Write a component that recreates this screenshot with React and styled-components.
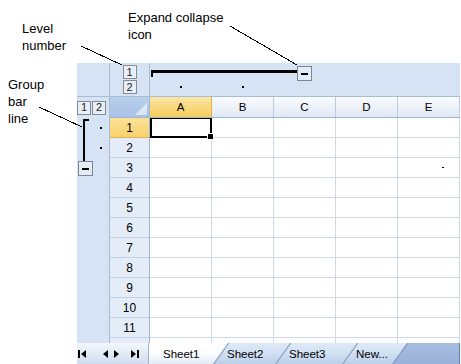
import React from "react";
import styled, { createGlobalStyle } from "styled-components";

const GlobalStyle = createGlobalStyle`
  html, body {
    margin: 0;
    padding: 0;
    background: #fff;
  }
  body {
    font-family: "Liberation Sans", Arial, sans-serif;
    color: #000;
  }
`;

const Page = styled.div`
  position: relative;
  width: 461px;
  height: 364px;
  overflow: hidden;
  box-sizing: border-box;
  padding: 63px 0 0 77px;
`;

const Callout = styled.div`
  position: absolute;
  left: ${(p) => p.$x}px;
  top: ${(p) => p.$y}px;
  font-size: 13px;
  line-height: 17px;
  white-space: pre;
`;

const Leaders = styled.svg`
  position: absolute;
  left: 0;
  top: 0;
  pointer-events: none;
`;

const Control = styled.div`
  width: 383px;
  height: 301px;
  display: flex;
  flex-direction: column;
  background: #d5e3f5;
  font-size: 11.5px;
`;

const Body = styled.div`
  flex: 1;
  min-height: 0;
  display: grid;
  grid-template-columns: 33px 40px 310px;
  grid-template-rows: 34px 21px 1fr;
  overflow: hidden;
`;

const Band = styled.div`
  box-sizing: border-box;
  background: #d5e3f5;
  border-right: ${(p) => (p.$right ? "1px solid #a9bcd6" : "none")};
  border-bottom: ${(p) => (p.$bottom ? "1px solid #a9bcd6" : "none")};
  min-height: 0;
  overflow: hidden;
`;

const LevelStack = styled(Band)`
  display: flex;
  flex-direction: ${(p) => (p.$row ? "row" : "column")};
  align-items: ${(p) => (p.$row ? "center" : "center")};
  justify-content: ${(p) => (p.$row ? "flex-start" : "center")};
  gap: 1px;
  padding-left: ${(p) => (p.$row ? "0" : "0")};
`;

const LevelBtn = styled.div`
  width: 14px;
  height: 14px;
  box-sizing: border-box;
  border: 1px solid #858b93;
  background: #e9eff8;
  display: flex;
  align-items: center;
  justify-content: center;
  font-size: 11px;
  line-height: 1;
  color: #222;
`;

const ToggleBtn = styled.div`
  flex: none;
  width: 15px;
  height: 15px;
  box-sizing: border-box;
  border: 1px solid #7d8590;
  background: #e4ecf7;
  display: flex;
  align-items: center;
  justify-content: center;
  margin-left: ${(p) => p.$ml || 0}px;

  &::after {
    content: "";
    width: 7px;
    height: 2px;
    background: #000;
  }
`;

const TopGroup = styled(Band)`
  display: flex;
  flex-direction: column;
`;

const GroupRow = styled.div`
  display: flex;
  align-items: flex-start;
  padding: 3px 0 0 1px;
`;

const HBracket = styled.div`
  flex: none;
  width: 146px;
  height: 7px;
  margin-top: 4px;
  box-sizing: border-box;
  border-top: 3px solid #000;
  border-left: 2px solid #000;
`;

const DotRow = styled.div`
  display: flex;
  margin-top: 5px;
`;

const DotCell = styled.div`
  width: 62px;
  height: 2px;
  display: flex;
  justify-content: center;
`;

const Dot = styled.span`
  width: 2px;
  height: 2px;
  background: #000;
`;

const LeftGroup = styled(Band)`
  display: flex;
`;

const BracketCol = styled.div`
  width: 16px;
  display: flex;
  flex-direction: column;
`;

const VBracket = styled.div`
  width: 6px;
  height: 42px;
  margin: 1px 0 0 6px;
  box-sizing: border-box;
  border-top: 2px solid #000;
  border-left: 2px solid #000;
`;

const DotCol = styled.div`
  width: 16px;
  padding-right: 1px;
  display: flex;
  flex-direction: column;
`;

const DotSlot = styled.div`
  height: 20px;
  display: flex;
  align-items: center;
  justify-content: center;
`;

const Corner = styled.div`
  position: relative;
  box-sizing: border-box;
  border-right: 1px solid #9eb6ce;
  border-bottom: 1px solid #9eb6ce;
  background: linear-gradient(#b9cfec, #a8c2e6);

  &::after {
    content: "";
    position: absolute;
    right: 2px;
    bottom: 2px;
    width: 12px;
    height: 12px;
    background: linear-gradient(135deg, #f4f7fb, #d2deed);
    clip-path: polygon(100% 0, 100% 100%, 0 100%);
  }
`;

const ColHeads = styled.div`
  display: flex;
  box-sizing: border-box;
  border-bottom: 1px solid #9eb6ce;
`;

const ColHead = styled.div`
  flex: none;
  width: 62px;
  box-sizing: border-box;
  border-right: 1px solid ${(p) => (p.$on ? "#e1b24c" : "#bccbe0")};
  display: flex;
  align-items: center;
  justify-content: center;
  background: ${(p) =>
    p.$on
      ? "linear-gradient(#fbe6a6, #f9da82 45%, #f6cb5a)"
      : "linear-gradient(#f9fbfe, #edf2f9 50%, #dfe8f4)"};
`;

const RowHeads = styled.div`
  box-sizing: border-box;
  border-right: 1px solid #9eb6ce;
  overflow: hidden;
  min-height: 0;
`;

const RowHead = styled.div`
  height: 20px;
  box-sizing: border-box;
  border-bottom: 1px solid ${(p) => (p.$on ? "#e1b24c" : "#c3d1e4")};
  display: flex;
  align-items: center;
  justify-content: center;
  font-size: 12px;
  background: ${(p) =>
    p.$on ? "linear-gradient(#fbe29a, #f7d26b)" : "#e4ecf7"};
`;

const Cells = styled.div`
  display: grid;
  grid-template-columns: repeat(5, 62px);
  grid-auto-rows: 20px;
  background: #fff;
  overflow: hidden;
  min-height: 0;
`;

const Cell = styled.div`
  position: relative;
  box-sizing: border-box;
  border-right: 1px solid #d0d7e5;
  border-bottom: 1px solid #d0d7e5;
  display: flex;
  align-items: center;
  justify-content: flex-end;
  padding-right: 15px;
`;

const ActiveFrame = styled.span`
  position: absolute;
  left: 0;
  top: -1px;
  right: -1px;
  bottom: -1px;
  border: 2px solid #000;
  z-index: 1;

  &::after {
    content: "";
    position: absolute;
    right: -4px;
    bottom: -4px;
    width: 5px;
    height: 5px;
    background: #000;
    border: 1px solid #fff;
    box-sizing: content-box;
  }
`;

const Mark = styled.span`
  width: 2px;
  height: 1px;
  background: #000;
`;

const TabBar = styled.div`
  flex: none;
  height: 21px;
  display: flex;
  background: #9cb4da;
`;

const Nav = styled.div`
  flex: none;
  width: 72px;
  box-sizing: border-box;
  border-right: 1px solid #9eb3d2;
  display: flex;
  align-items: center;
  background: linear-gradient(#f3f7fc, #e2eaf6 50%, #cfdcef);
`;

const NavIcon = styled.svg`
  flex: none;
  margin-left: ${(p) => p.$ml}px;
`;

const Tab = styled.div`
  position: relative;
  flex: none;
  width: ${(p) => p.$w}px;
  margin-left: ${(p) => (p.$first ? 0 : -15)}px;
  box-sizing: border-box;
  padding-left: 14px;
  display: flex;
  align-items: center;
  background: #8aa3c8;
  clip-path: ${(p) =>
    p.$first ? "none" : "polygon(0 100%, 15px 0, 100% 0, 100% 100%)"};

  &::before {
    content: "";
    position: absolute;
    inset: 0;
    background: ${(p) =>
      p.$active
        ? "linear-gradient(#ffffff, #fbfcfe 55%, #e3ebf6)"
        : "linear-gradient(#dfe9f6, #d3e1f3 45%, #bccfea)"};
    clip-path: ${(p) =>
      p.$first ? "none" : "polygon(1.5px 100%, 16.5px 0, 100% 0, 100% 100%)"};
  }
`;

const TabLabel = styled.span`
  position: relative;
  font-size: 11.5px;
`;

const Filler = styled.div`
  flex: 1;
  margin-left: -15px;
  position: relative;
  background: #7d98c2;
  clip-path: polygon(0 100%, 15px 0, 100% 0, 100% 100%);
  border-right: 1px solid #5f7fae;

  &::before {
    content: "";
    position: absolute;
    inset: 0;
    background: linear-gradient(#a6bde0, #9ab2d9);
    clip-path: polygon(1.5px 100%, 16.5px 0, 100% 0, 100% 100%);
  }
`;

const cols = ["A", "B", "C", "D", "E"];
const rows = Array.from({ length: 12 }, (_, i) => i + 1);

const tabs = [
  { name: "Sheet1", w: 79, active: true, first: true },
  { name: "Sheet2", w: 77 },
  { name: "Sheet3", w: 82 },
  { name: "New...", w: 65 },
];

export default function App() {
  return (
    <>
      <GlobalStyle />
      <Page>
        <Control>
          <Body>
            <Band $right $bottom />
            <LevelStack $right $bottom>
              <LevelBtn>1</LevelBtn>
              <LevelBtn>2</LevelBtn>
            </LevelStack>
            <TopGroup $bottom>
              <GroupRow>
                <HBracket />
                <ToggleBtn />
              </GroupRow>
              <DotRow>
                {cols.map((c, i) => (
                  <DotCell key={c}>{i < 2 && <Dot />}</DotCell>
                ))}
              </DotRow>
            </TopGroup>

            <LevelStack $row $right>
              <LevelBtn>1</LevelBtn>
              <LevelBtn>2</LevelBtn>
            </LevelStack>
            <Corner />
            <ColHeads>
              {cols.map((c) => (
                <ColHead key={c} $on={c === "A"}>
                  {c}
                </ColHead>
              ))}
            </ColHeads>

            <LeftGroup $right>
              <BracketCol>
                <VBracket />
                <ToggleBtn $ml={1} />
              </BracketCol>
              <DotCol>
                <DotSlot>
                  <Dot />
                </DotSlot>
                <DotSlot>
                  <Dot />
                </DotSlot>
              </DotCol>
            </LeftGroup>
            <RowHeads>
              {rows.map((r) => (
                <RowHead key={r} $on={r === 1}>
                  {r}
                </RowHead>
              ))}
            </RowHeads>
            <Cells>
              {rows.map((r) =>
                cols.map((c) => (
                  <Cell key={c + r}>
                    {r === 1 && c === "A" && <ActiveFrame />}
                    {r === 3 && c === "E" && <Mark />}
                  </Cell>
                ))
              )}
            </Cells>
          </Body>

          <TabBar>
            <Nav>
              <NavIcon $ml={1} width="8" height="8" viewBox="0 0 8 8">
                <rect x="0" y="0" width="2" height="8" />
                <path d="M8 0 L3 4 L8 8Z" />
              </NavIcon>
              <NavIcon $ml={17} width="5" height="8" viewBox="0 0 5 8">
                <path d="M5 0 L0 4 L5 8Z" />
              </NavIcon>
              <NavIcon $ml={6} width="5" height="8" viewBox="0 0 5 8">
                <path d="M0 0 L5 4 L0 8Z" />
              </NavIcon>
              <NavIcon $ml={12} width="8" height="8" viewBox="0 0 8 8">
                <path d="M0 0 L5 4 L0 8Z" />
                <rect x="6" y="0" width="2" height="8" />
              </NavIcon>
            </Nav>
            {tabs.map((t) => (
              <Tab key={t.name} $w={t.w} $active={t.active} $first={t.first}>
                <TabLabel>{t.name}</TabLabel>
              </Tab>
            ))}
            <Filler />
          </TabBar>
        </Control>

        <Callout $x={22} $y={20}>{"Level\nnumber"}</Callout>
        <Callout $x={128} $y={9}>{"Expand collapse\nicon"}</Callout>
        <Callout $x={8} $y={76}>{"Group\nbar\nline"}</Callout>

        <Leaders width="461" height="364" viewBox="0 0 461 364">
          <g stroke="#000" strokeWidth="1" shapeRendering="crispEdges">
            <line x1="81" y1="46" x2="122" y2="65" />
            <line x1="230" y1="26" x2="297" y2="65" />
            <line x1="39" y1="107" x2="82" y2="127" />
          </g>
        </Leaders>
      </Page>
    </>
  );
}
